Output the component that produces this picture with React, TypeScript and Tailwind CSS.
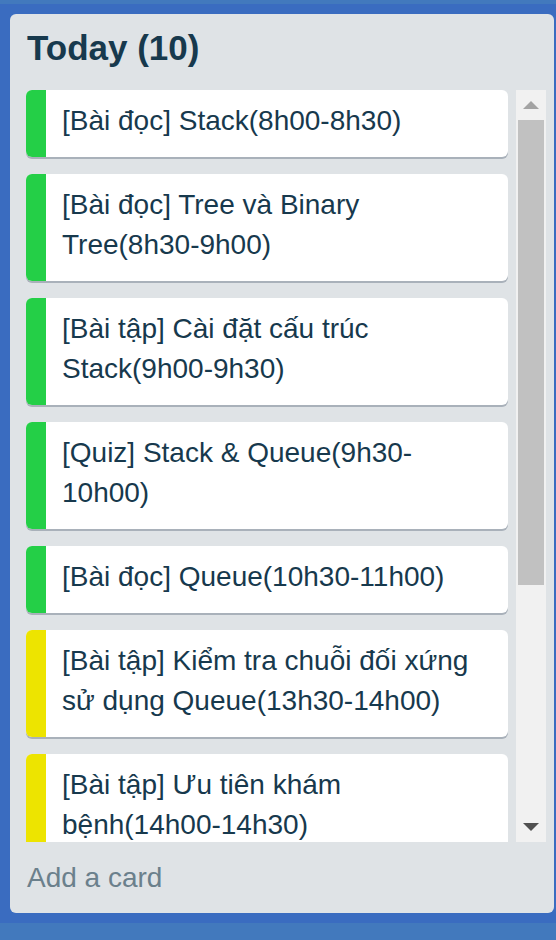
import React from 'react'

type Card = { title: string; color: 'green' | 'yellow' }

const cards: Card[] = [
  { title: '[Bài đọc] Stack(8h00-8h30)', color: 'green' },
  { title: '[Bài đọc] Tree và Binary Tree(8h30-9h00)', color: 'green' },
  { title: '[Bài tập] Cài đặt cấu trúc Stack(9h00-9h30)', color: 'green' },
  { title: '[Quiz] Stack & Queue(9h30-10h00)', color: 'green' },
  { title: '[Bài đọc] Queue(10h30-11h00)', color: 'green' },
  { title: '[Bài tập] Kiểm tra chuỗi đối xứng sử dụng Queue(13h30-14h00)', color: 'yellow' },
  { title: '[Bài tập] Ưu tiên khám bệnh(14h00-14h30)', color: 'yellow' },
]

const Scrollbar = () => {
  return (
    <div className="flex w-[30px] shrink-0 flex-col bg-[#f1f1f1]">
      <div className="flex h-[30px] items-center justify-center">
        <svg width="16" height="8" viewBox="0 0 16 8">
          <polygon points="8,0 16,8 0,8" fill="#a3a3a3" />
        </svg>
      </div>
      <div className="mx-[2px] h-[465px] bg-[#c1c1c1]" />
      <div className="flex-1" />
      <div className="flex h-[30px] items-center justify-center">
        <svg width="16" height="8" viewBox="0 0 16 8">
          <polygon points="0,0 16,0 8,8" fill="#505050" />
        </svg>
      </div>
    </div>
  )
}

export default function App() {
  return (
    <div className="flex min-h-[940px] flex-col font-['Liberation_Sans',Arial,sans-serif]">
      <div className="h-[4px] bg-[#4279bd]" />
      <div className="bg-[#3a6cc0] py-[10px] pl-[10px] pr-[2px]">
        <div className="flex h-[899px] flex-col rounded-[6px] bg-[#dfe3e6]">
          <h2 className="px-[17px] pt-[14px] text-[35px] font-bold leading-[40px] text-[#17394d]">
            Today (10)
          </h2>
          <div className="mt-[22px] flex h-[752px] gap-[8px] pl-[16px] pr-[8px]">
            <div className="flex flex-1 flex-col gap-[17px] overflow-hidden">
              {cards.map((card, i) => (
                <div
                  key={i}
                  className="flex shrink-0 overflow-hidden rounded-[6px] bg-white shadow-[0_2px_0_#a9b1ba]"
                >
                  <div
                    className={
                      card.color === 'green'
                        ? 'w-[20px] shrink-0 bg-[#24cf47]'
                        : 'w-[20px] shrink-0 bg-[#ede400]'
                    }
                  />
                  <p className="px-[16px] pb-[16px] pt-[11px] text-[28px] leading-[40px] text-[#17394d]">
                    {card.title}
                  </p>
                </div>
              ))}
            </div>
            <Scrollbar />
          </div>
          <p className="mt-[16px] px-[17px] text-[28px] leading-[40px] text-[#6b808c]">
            Add a card
          </p>
        </div>
      </div>
      <div className="flex-1 bg-[#4279bd]" />
    </div>
  )
}
